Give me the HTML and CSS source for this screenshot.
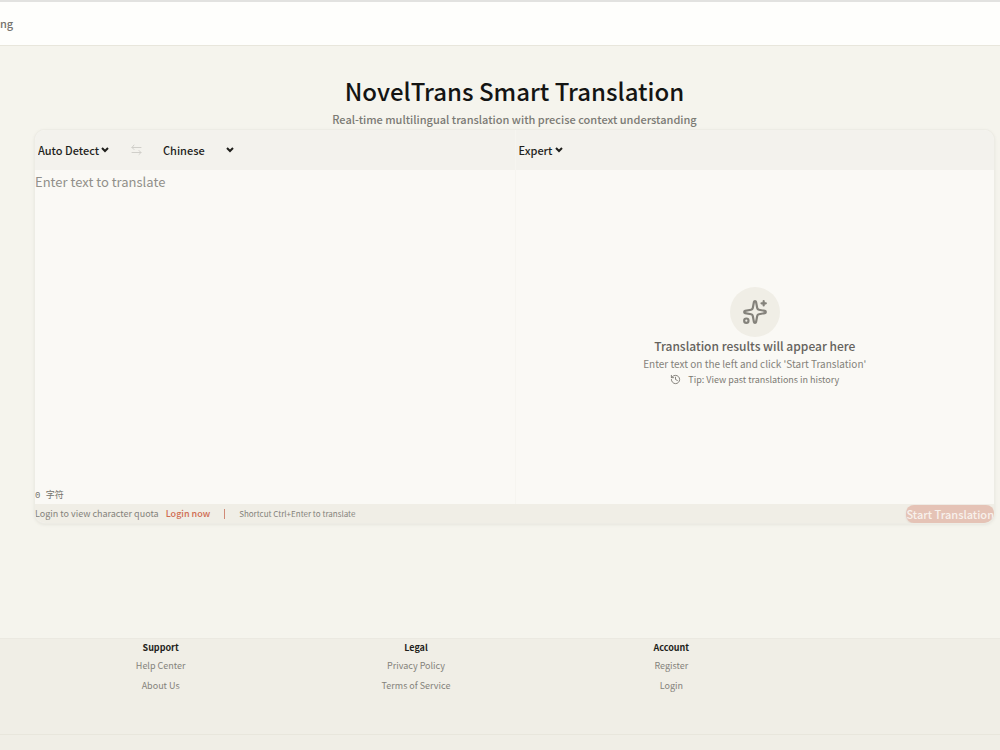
FILE: index.html
```html
<!DOCTYPE html>
<html lang="en">
<head>
<meta charset="utf-8">
<title>NovelTrans Smart Translation</title>
<link rel="stylesheet" href="styles.css">
</head>
<body>
<header class="topbar"><a class="nav-link" href="#">ng</a></header>
<main class="main">
  <h1 class="title">NovelTrans Smart Translation</h1>
  <p class="subtitle">Real-time multilingual translation with precise context understanding</p>
  <section class="card">
    <div class="toolbar">
      <div class="tools">
        <div class="picker source">
          <select class="select" aria-label="Source language"><option>Auto Detect</option></select>
          <svg class="chevron" width="8" height="6" viewBox="0 0 8 6" fill="none" stroke="currentColor" stroke-width="2"><path d="M1 1l3 3 3-3"/></svg>
        </div>
        <button class="swap" type="button" aria-label="Swap languages" disabled>
          <svg width="11" height="12" viewBox="0 0 11 12" fill="none" stroke="currentColor" stroke-linecap="round" stroke-linejoin="round"><path d="M3 1 1 3.500l2 2M1 3.500h9M8 6.500l2 2-2 2M10 8.500H1"/></svg>
        </button>
        <div class="picker target">
          <select class="select" aria-label="Target language"><option>Chinese</option></select>
          <svg class="chevron" width="8" height="6" viewBox="0 0 8 6" fill="none" stroke="currentColor" stroke-width="2"><path d="M1 1l3 3 3-3"/></svg>
        </div>
      </div>
      <div class="tools mode">
        <div class="picker level">
          <select class="select" aria-label="Translation mode"><option>Expert</option></select>
          <svg class="chevron" width="8" height="6" viewBox="0 0 8 6" fill="none" stroke="currentColor" stroke-width="2"><path d="M1 1l3 3 3-3"/></svg>
        </div>
      </div>
    </div>
    <div class="panes">
      <div class="pane">
        <textarea class="input" aria-label="Source text" placeholder="Enter text to translate"></textarea>
        <div class="count">0 字符</div>
      </div>
      <div class="pane result">
        <div class="badge">
          <svg width="26" height="26" viewBox="0 0 24 24" fill="none" stroke="currentColor" stroke-width="2" stroke-linecap="round" stroke-linejoin="round"><path d="M11.017 2.814a1 1 0 0 1 1.966 0l1.051 5.558a2 2 0 0 0 1.594 1.594l5.558 1.051a1 1 0 0 1 0 1.966l-5.558 1.051a2 2 0 0 0-1.594 1.594l-1.051 5.558a1 1 0 0 1-1.966 0l-1.051-5.558a2 2 0 0 0-1.594-1.594l-5.558-1.051a1 1 0 0 1 0-1.966l5.558-1.051a2 2 0 0 0 1.594-1.594zM20 2v4M22 4h-4"/><circle cx="4" cy="20" r="2"/></svg>
        </div>
        <p class="result-title">Translation results will appear here</p>
        <p class="result-text">Enter text on the left and click 'Start Translation'</p>
        <p class="tip">
          <svg width="11" height="11" viewBox="0 0 24 24" fill="none" stroke="currentColor" stroke-width="2" stroke-linecap="round" stroke-linejoin="round"><path d="M3 12a9 9 0 1 0 9-9 9.75 9.75 0 0 0-6.74 2.74L3 8M3 3v5h5M12 7v5l4 2"/></svg>
          <span>Tip: View past translations in history</span>
        </p>
      </div>
    </div>
    <div class="actions">
      <span class="quota">Login to view character quota</span>
      <a class="login" href="#">Login now</a>
      <span class="bar"></span>
      <span class="shortcut">Shortcut Ctrl+Enter to translate</span>
      <button class="start" type="button" disabled>Start Translation</button>
    </div>
  </section>
</main>
<footer class="footer">
  <div class="columns">
    <nav class="column"><h2 class="heading">Support</h2><a class="link" href="#">Help Center</a><a class="link" href="#">About Us</a></nav>
    <nav class="column"><h2 class="heading">Legal</h2><a class="link" href="#">Privacy Policy</a><a class="link" href="#">Terms of Service</a></nav>
    <nav class="column"><h2 class="heading">Account</h2><a class="link" href="#">Register</a><a class="link" href="#">Login</a></nav>
  </div>
  <div class="legal"></div>
</footer>
</body>
</html>
```
FILE: styles.css
```css
* { box-sizing: border-box; }
body {
  margin: 0;
  min-height: 100vh;
  display: flex;
  flex-direction: column;
  background: #f5f4ed;
  color: #1f1f1c;
  font-family: "Noto Sans CJK SC", sans-serif;
}
h1, h2, p { margin: 0; }
a { text-decoration: none; }
button, select, textarea { font-family: inherit; }
.topbar {
  height: 46px;
  padding-bottom: 2px;
  display: flex;
  align-items: center;
  background: #fefefc;
  border-top: 2px solid #e2e2e0;
  border-bottom: 1px solid #e8e6dc;
}
.nav-link { color: #75746e; font-size: 11px; font-weight: 500; }
.main {
  flex: 1;
  padding: 27px 6px 0 35px;
}
.title {
  text-align: center;
  font-size: 24px;
  line-height: 36px;
  font-weight: 500;
  color: #141413;
}
.subtitle {
  text-align: center;
  font-size: 11px;
  line-height: 20px;
  font-weight: 500;
  color: #7b7a74;
}
.card {
  margin-top: 1px;
  border-radius: 10px;
  overflow: hidden;
  background: #faf9f5;
  box-shadow: 0 0 0 1px #edece5, 0 1px 3px 1px #e6e5dd;
}
.toolbar {
  height: 40px;
  display: grid;
  grid-template-columns: 1fr 1fr;
  background: #f3f2ed;
}
.tools { display: flex; align-items: center; }
.mode { border-left: 1px solid #f6f5f0; }
.picker { position: relative; display: flex; align-items: center; }
.select {
  appearance: none;
  width: 100%;
  border: 0;
  padding: 0 12px 0 3px;
  background: transparent;
  color: #1f1f1c;
  font-size: 11px;
  font-weight: 500;
}
.chevron { position: absolute; right: 3px; pointer-events: none; }
.source { width: 77px; }
.target { width: 77px; }
.level { width: 50px; }
.swap {
  margin: 0 18px 0 19px;
  padding: 0;
  display: flex;
  border: 0;
  background: none;
  color: #d0cfca;
}
.panes {
  min-height: 334px;
  display: grid;
  grid-template-columns: 1fr 1fr;
}
.pane { display: flex; flex-direction: column; }
.input {
  flex: 1;
  width: 100%;
  padding: 0;
  border: 0;
  outline: 0;
  resize: none;
  background: transparent;
  font-size: 13px;
  line-height: 24px;
}
.input::placeholder { color: #91908a; }
.count {
  font-family: "Liberation Mono", "Noto Sans CJK SC", monospace;
  font-size: 9px;
  line-height: 16px;
  color: #75736c;
}
.result {
  align-items: center;
  justify-content: center;
  border-left: 1px solid #f6f5f0;
}
.badge {
  width: 50px;
  height: 50px;
  display: grid;
  place-items: center;
  border-radius: 50%;
  background: #f0eee6;
  color: #84827b;
}
.result-title { font-size: 12px; line-height: 18px; font-weight: 500; color: #65635d; }
.result-text { font-size: 10px; line-height: 17px; color: #84827b; }
.tip {
  display: flex;
  align-items: center;
  gap: 7px;
  font-size: 9px;
  line-height: 16px;
  color: #7c7a73;
}
.actions {
  height: 19px;
  display: flex;
  align-items: center;
  background: #f0eee6;
  color: #84827b;
  font-size: 9px;
}
.login { margin-left: 7px; color: #cf6b50; font-weight: 500; }
.bar { width: 1px; height: 10px; margin: 0 14px; background: #d08a76; }
.shortcut { font-size: 8px; }
.start {
  height: 18px;
  margin-left: auto;
  padding: 0;
  border: 0;
  border-radius: 8px;
  background: #e5c3b6;
  color: #f8f1ec;
  font-size: 11px;
  line-height: 18px;
  font-weight: 500;
  box-shadow: 0 1px 2px #e2d8cf;
}
.footer {
  background: #f0eee6;
  border-top: 1px solid #ebe9e1;
}
.columns {
  display: grid;
  grid-template-columns: repeat(3, 1fr);
  padding: 0 201px 0 33px;
  height: 95px;
}
.column { display: flex; flex-direction: column; align-items: center; }
.heading { font-size: 9px; line-height: 18px; font-weight: 700; }
.link { font-size: 9px; line-height: 18px; margin-bottom: 2px; color: #84827b; }
.legal { height: 16px; border-top: 1px solid #e8e6dc; }
```
